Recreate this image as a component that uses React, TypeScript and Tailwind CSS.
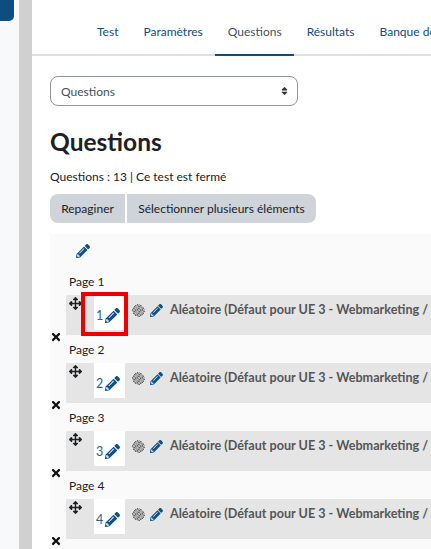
import React from "react";
import { FaArrowsAlt, FaPencilAlt, FaTimes, FaSort } from "react-icons/fa";

function RandomIcon() {
  const dots: React.ReactElement[] = [];
  for (let i = 0; i < 13; i++) {
    for (let j = 0; j < 13; j++) {
      const dx = i - 6;
      const dy = j - 6;
      if (dx * dx + dy * dy <= 38) {
        const v = (i * 7 + j * 11 + i * j) % 5;
        const fill = v === 0 ? "#666" : v === 1 ? "#888" : v === 2 ? "#c4c4c4" : "#a4a4a4";
        dots.push(<rect key={`${i}-${j}`} x={i} y={j} width="1" height="1" fill={fill} />);
      }
    }
  }
  return (
    <svg viewBox="0 0 13 13" className="w-[13px] h-[13px] shrink-0">
      {dots}
    </svg>
  );
}

function QuestionRow({ n, highlighted }: { n: number; highlighted?: boolean }) {
  return (
    <div>
      <div className="h-[28px] pl-[19px] pt-[6px] text-[12px] leading-[18px] text-[#1d2125]">Page {n}</div>
      <div className="relative h-[40px] ml-[16px] bg-[#e5e5e5] flex items-start">
        <FaArrowsAlt className="w-[13px] h-[13px] text-[#1d2125] ml-[3px] mt-[2px] shrink-0" />
        <div className="ml-[12px] w-[31px] h-[35px] bg-white flex items-center pt-[6px] pl-[2px] shrink-0">
          <span className="text-[12.5px] leading-[18px] text-[#2f5f8a]">{n}</span>
          <FaPencilAlt className="w-[15px] h-[15px] text-[#0f5088] ml-[2px]" />
        </div>
        <div className="ml-[7px] mt-[8px] flex items-center shrink-0">
          <RandomIcon />
          <FaPencilAlt className="w-[13px] h-[13px] text-[#0f5088] ml-[5px]" />
          <span className="ml-[7px] text-[12.6px] font-bold leading-[14px] text-[#555] whitespace-nowrap">
            Aléatoire (Défaut pour UE 3 - Webmarketing /
          </span>
        </div>
        <FaTimes className="absolute left-[-16px] bottom-[-8px] w-[12px] h-[12px] text-[#111]" />
        {highlighted && (
          <div className="absolute left-[15px] top-[-3px] w-[47px] h-[44px] border-[4px] border-[#ee0000]" />
        )}
      </div>
    </div>
  );
}

export default function App() {
  return (
    <div className="w-[431px] h-[549px] overflow-hidden flex bg-white font-['Lato',sans-serif]">
      <div className="w-[19px] shrink-0 bg-[#f8f9fa]">
        <div className="w-[14px] h-[21px] bg-[#0f4c81] rounded-br-[5px]" />
      </div>
      <div className="w-[13px] shrink-0 bg-[#d0d0d0]" />
      <div className="flex-1 min-w-0 overflow-hidden">
        <div className="h-[56px] border-b-2 border-[#e0e0e0] flex pl-[52px] whitespace-nowrap text-[12px] leading-[18px] text-[#0f4c81]">
          <div className="h-[56px] pl-[13px] pr-[12.5px] pt-[23px]">Test</div>
          <div className="h-[56px] px-[12.5px] pt-[23px]">Paramètres</div>
          <div className="h-[56px] px-[12.5px] pt-[23px] border-b-2 border-[#0f4c81] text-[#444f5a]">Questions</div>
          <div className="h-[56px] px-[12.5px] pt-[23px]">Résultats</div>
          <div className="h-[56px] px-[12.5px] pt-[23px]">Banque de questions</div>
        </div>
        <div className="pl-[18px]">
          <div className="mt-[20px] w-[248px] h-[30px] border border-[#8f959e] rounded-[8px] flex items-center justify-between pl-[10px] pr-[8px] text-[12px] text-[#495057]">
            <span className="pt-[1px]">Questions</span>
            <FaSort className="w-[9px] h-[10px] text-[#333]" />
          </div>
          <h1 className="mt-[20px] text-[24.5px] leading-[32px] font-bold text-[#1d2125]">Questions</h1>
          <div className="mt-[10px] text-[12px] leading-[18px] text-[#1d2125]">Questions : 13 | Ce test est fermé</div>
          <div className="mt-[8px] flex h-[29px] text-[12px] text-[#1d2125]">
            <div className="w-[75px] bg-[#ced4da] rounded-l-[8px] flex items-center justify-center">Repaginer</div>
            <div className="ml-[2px] w-[189px] bg-[#ced4da] rounded-r-[8px] flex items-center justify-center whitespace-nowrap">Sélectionner plusieurs éléments</div>
          </div>
          <div className="mt-[11px] bg-[#fafafa] pt-[10px] h-[400px]">
            <div className="pl-[26px] h-[23px]">
              <FaPencilAlt className="w-[14px] h-[14px] text-[#0f5088]" />
            </div>
            <QuestionRow n={1} highlighted />
            <QuestionRow n={2} />
            <QuestionRow n={3} />
            <QuestionRow n={4} />
          </div>
        </div>
      </div>
    </div>
  );
}
